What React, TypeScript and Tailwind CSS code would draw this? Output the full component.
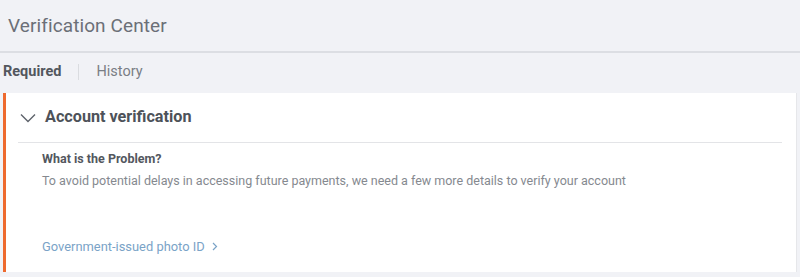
const App = () => {
  return (
    <div className="w-[800px] h-[277px] bg-[#f1f2f6] overflow-hidden font-['Roboto',sans-serif]">
      <header className="h-[53px] flex items-center px-[8px] border-b-2 border-[#dcdee3]">
        <h1 className="text-[19px] text-[#6b6f77] tracking-[0.1px] mt-[1px]">Verification Center</h1>
      </header>
      <nav className="h-[38px] flex items-center pl-[3px] text-[14.5px]">
        <span className="font-bold text-[#53575e]">Required</span>
        <span className="mx-[17px] w-px h-[16px] bg-[#dadce0]" />
        <span className="text-[#7a7e85]">History</span>
      </nav>
      <section className="mt-[2px] ml-[3px] mr-[3px] h-[179px] bg-white border-l-[3px] border-[#ee6a2e] border-r border-r-[#e6e7ea]">
        <div className="ml-[12px] mr-[14px] h-[50px] flex items-center border-b border-[#e3e4e7]">
          <svg width="16" height="10" viewBox="0 0 16 10" className="mr-[9px] ml-[2px]">
            <path d="M1 1.5 L8 8.5 L15 1.5" fill="none" stroke="#5e636b" strokeWidth="1.4" />
          </svg>
          <h2 className="text-[16.2px] font-bold text-[#4d5259]">Account verification</h2>
        </div>
        <div className="pl-[36px] pt-[7px] text-[12.5px]">
          <p className="font-bold text-[#53575e] leading-[17px]">What is the Problem?</p>
          <p className="text-[#85898f] leading-[17px] mt-[5px]">
            To avoid potential delays in accessing future payments, we need a few more details to verify your account
          </p>
          <a className="inline-flex items-center mt-[49px] text-[12.9px] text-[#7aa3c7] leading-[17px]">
            Government-issued photo ID
            <svg width="6" height="9" viewBox="0 0 6 9" className="ml-[7px]">
              <path d="M1 1 L4.5 4.5 L1 8" fill="none" stroke="#7aa3c7" strokeWidth="1.2" />
            </svg>
          </a>
        </div>
      </section>
    </div>
  )
}

export default App
